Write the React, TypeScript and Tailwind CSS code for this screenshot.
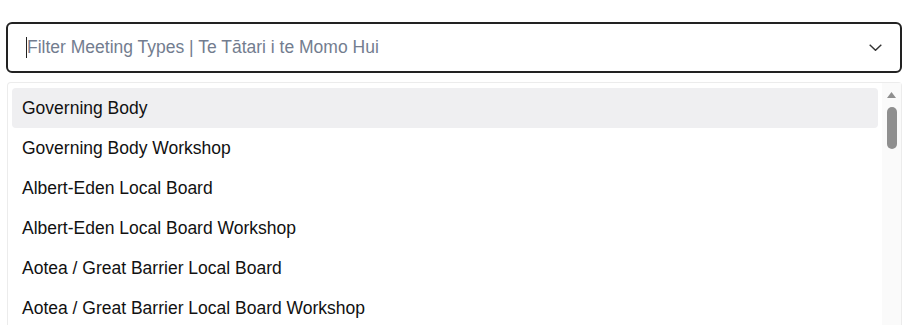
import React from "react";

const items = [
  "Governing Body",
  "Governing Body Workshop",
  "Albert-Eden Local Board",
  "Albert-Eden Local Board Workshop",
  "Aotea / Great Barrier Local Board",
  "Aotea / Great Barrier Local Board Workshop",
];

export default function App() {
  return (
    <div
      className="h-[325px] overflow-hidden bg-white pt-[22px] pl-[6px] pr-[1px]"
      style={{ fontFamily: '"Liberation Sans", Arial, sans-serif' }}
    >
      <div className="flex h-[51px] items-center rounded-[6px] border-2 border-[#222222] pl-[18px] pr-[18px]">
        <span className="h-[21px] w-px bg-[#222]" />
        <span className="flex-1 text-[17.5px] text-[#737d8f]">
          Filter Meeting Types | Te Tātari i te Momo Hui
        </span>
        <svg width="13" height="7" viewBox="0 0 13 7" fill="none">
          <path d="M0.7 0.7l5.8 5.6 5.8-5.6" stroke="#333" strokeWidth="1.4" />
        </svg>
      </div>
      <div className="ml-[1px] mt-[9px] flex rounded-t-[4px] border border-b-0 border-[#ececec] h-[300px]">
        <div className="flex-1 px-[4px] pt-[5px]">
          {items.map((t, i) => (
            <div
              key={t}
              className={`flex h-[40px] items-center rounded-[4px] pl-[10px] text-[17.5px] text-[#111] ${
                i === 0 ? "bg-[#efeff1]" : ""
              }`}
            >
              {t}
            </div>
          ))}
        </div>
        <div className="flex w-[19px] flex-col items-center bg-[#fafafa] pt-[9px]">
          <svg width="9" height="6" viewBox="0 0 9 6">
            <path d="M4.5 0L9 6H0z" fill="#8f8f8f" />
          </svg>
          <div className="mt-[9px] h-[42px] w-[10px] rounded-full bg-[#8f8f8f]" />
        </div>
      </div>
    </div>
  );
}
